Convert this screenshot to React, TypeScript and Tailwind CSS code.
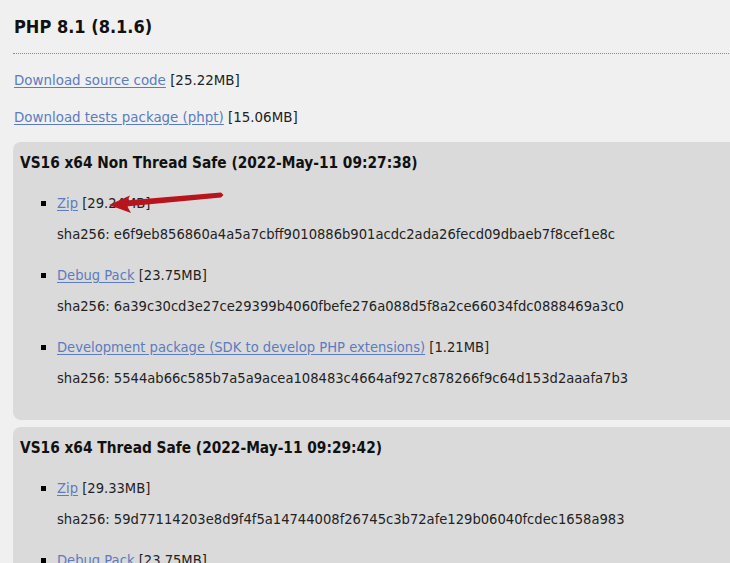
import React from "react";

const font = { fontFamily: '"DejaVu Sans Condensed", "DejaVu Sans", sans-serif' };

function Item({ name, size, sha, first }: { name: string; size: string; sha: string; first?: boolean }) {
  return (
    <li className={first ? "" : "mt-[21px]"}>
      <div className="flex items-center leading-5">
        <span className="w-[5px] h-[5px] bg-black ml-[21px] mr-[11px] shrink-0" />
        <span>
          <a className="text-[#5c7cbf] underline decoration-[#5c7cbf] underline-offset-2">{name}</a> {size}
        </span>
      </div>
      <div className="mt-[11px] leading-5 pl-[37px]">sha256: {sha}</div>
    </li>
  );
}

function Box({ title, items }: { title: string; items: { name: string; size: string; sha: string }[] }) {
  return (
    <div className="bg-[#dadada] rounded-[8px] w-[760px] pl-[7px] pt-[11px] pb-[32px]">
      <div className="font-bold text-[15.3px] leading-5 text-[#111]">{title}</div>
      <ul className="mt-[20px] text-[14.6px] text-[#222]">
        {items.map((it, i) => (
          <Item key={i} {...it} first={i === 0} />
        ))}
      </ul>
    </div>
  );
}

export default function App() {
  return (
    <div className="relative w-[730px] h-[563px] overflow-hidden bg-[#f0f0f0] text-[#222]" style={font}>
      <div className="pl-[13px]">
        <div className="pt-[15px] pl-[1px] leading-6 text-[18px] font-bold text-[#111]">PHP 8.1 (8.1.6)</div>
        <div className="mt-[14px] border-t border-dotted border-[#8a8a8a] w-[760px]" />
        <div className="mt-[16px] pl-[1px] leading-5 text-[14.9px]">
          <a className="text-[#5c7cbf] underline underline-offset-2">Download source code</a> [25.22MB]
        </div>
        <div className="mt-[17px] pl-[1px] leading-5 text-[14.9px]">
          <a className="text-[#5c7cbf] underline underline-offset-2">Download tests package (phpt)</a> [15.06MB]
        </div>
        <div className="mt-[15px]">
          <Box
            title="VS16 x64 Non Thread Safe (2022-May-11 09:27:38)"
            items={[
              { name: "Zip", size: "[29.24MB]", sha: "e6f9eb856860a4a5a7cbff9010886b901acdc2ada26fecd09dbaeb7f8cef1e8c" },
              { name: "Debug Pack", size: "[23.75MB]", sha: "6a39c30cd3e27ce29399b4060fbefe276a088d5f8a2ce66034fdc0888469a3c0" },
              { name: "Development package (SDK to develop PHP extensions)", size: "[1.21MB]", sha: "5544ab66c585b7a5a9acea108483c4664af927c878266f9c64d153d2aaafa7b3" },
            ]}
          />
        </div>
        <div className="mt-[7px]">
          <Box
            title="VS16 x64 Thread Safe (2022-May-11 09:29:42)"
            items={[
              { name: "Zip", size: "[29.33MB]", sha: "59d77114203e8d9f4f5a14744008f26745c3b72afe129b06040fcdec1658a983" },
              { name: "Debug Pack", size: "[23.75MB]", sha: "6a39c30cd3e27ce29399b4060fbefe276a088d5f8a2ce66034fdc0888469a3c0" },
            ]}
          />
        </div>
      </div>
      <svg className="absolute left-0 top-0 pointer-events-none" width="730" height="563" viewBox="0 0 730 563">
        <polygon points="126,200.5 221,192.5 223.5,195 221,197.5 126,206.5" fill="#b8141c" />
        <polygon points="109,205 130,195.5 126,204 131,213" fill="#b8141c" />
      </svg>
    </div>
  );
}
